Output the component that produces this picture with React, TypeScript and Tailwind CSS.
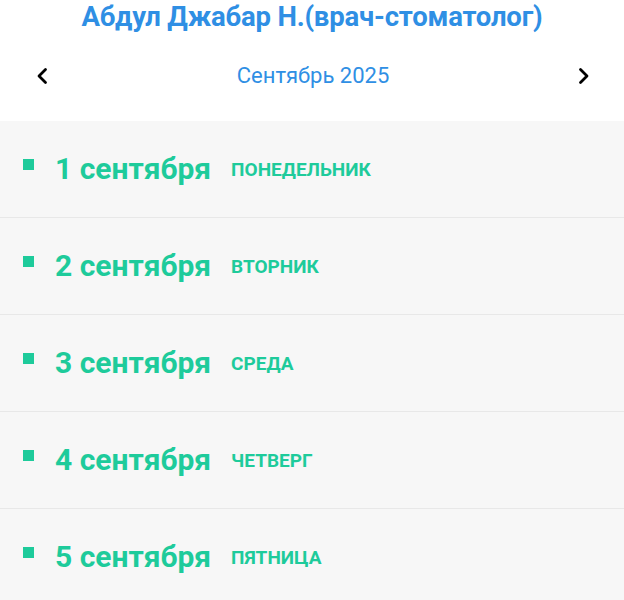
import React from "react";

const days = [
  { d: "1 сентября", w: "ПОНЕДЕЛЬНИК" },
  { d: "2 сентября", w: "ВТОРНИК" },
  { d: "3 сентября", w: "СРЕДА" },
  { d: "4 сентября", w: "ЧЕТВЕРГ" },
  { d: "5 сентября", w: "ПЯТНИЦА" },
];

export default function App() {
  return (
    <div className="w-[624px] h-[600px] overflow-hidden bg-white" style={{ fontFamily: "Roboto, 'Noto Sans', sans-serif" }}>
      <div className="h-[34px] flex items-center justify-center">
        <h1 className="text-[27.5px] font-bold text-[#2f8fe4] leading-none tracking-[-0.2px]">Абдул Джабар Н.(врач-стоматолог)</h1>
      </div>
      <div className="h-[87px] flex items-center justify-between pl-[35px] pr-[33px] pb-[4px]">
        <svg width="14" height="20" viewBox="0 0 14 20" fill="none">
          <path d="M10.5 3.5 L4 10 L10.5 16.5" stroke="#000" strokeWidth="2.8" strokeLinecap="round" strokeLinejoin="round" />
        </svg>
        <span className="text-[22px] text-[#2f8fe4]">Сентябрь 2025</span>
        <svg width="14" height="20" viewBox="0 0 14 20" fill="none">
          <path d="M3.5 3.5 L10 10 L3.5 16.5" stroke="#000" strokeWidth="2.8" strokeLinecap="round" strokeLinejoin="round" />
        </svg>
      </div>
      <div className="bg-[#f7f7f7]">
        {days.map((x) => (
          <div key={x.d} className="h-[97px] flex items-center border-b border-[#e8e8e8] pl-[23px]">
            <div className="w-[11px] h-[11px] bg-[#1ecb9b] mr-[21px] -mt-[9px]" />
            <span className="text-[30px] font-bold text-[#1ecb9b] leading-none">{x.d}</span>
            <span className="ml-[20px] text-[19px] font-bold text-[#1ecb9b] leading-none">{x.w}</span>
          </div>
        ))}
      </div>
    </div>
  );
}
